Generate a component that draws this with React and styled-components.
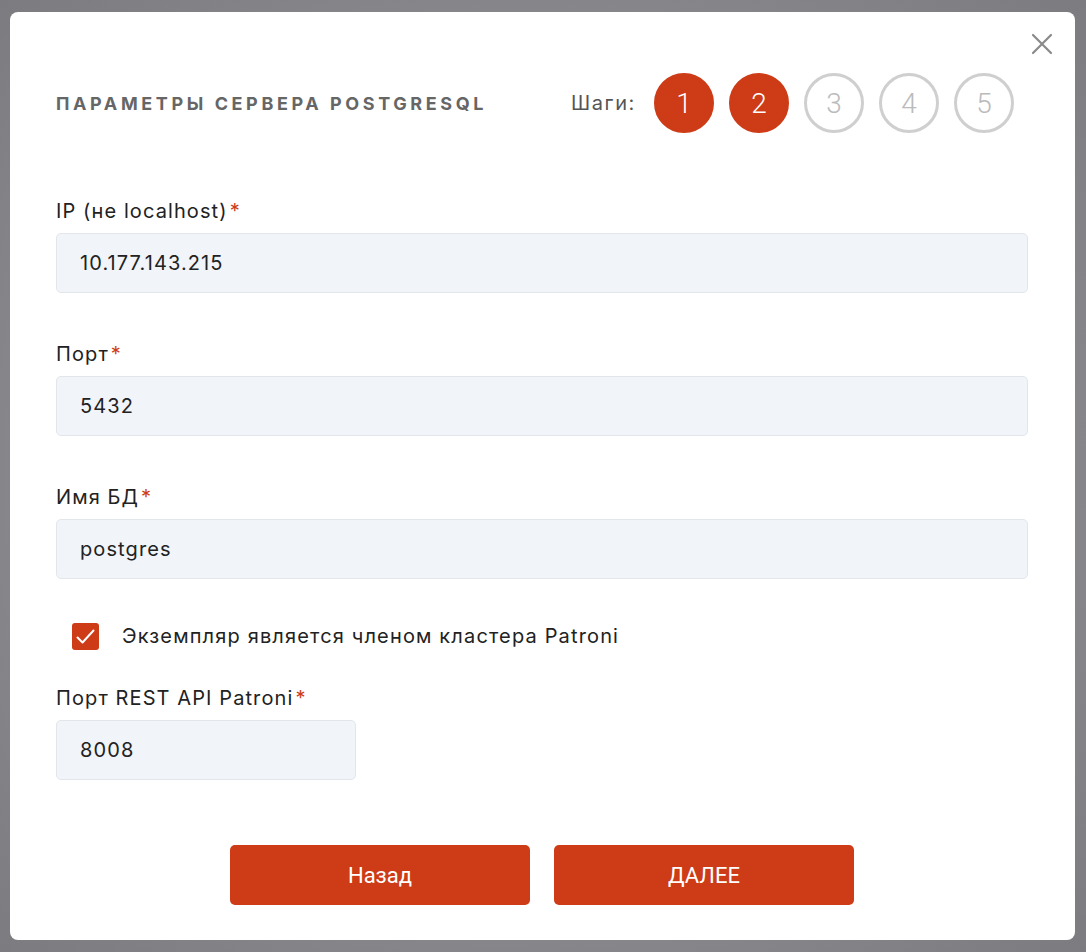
import React from 'react';
import styled, { createGlobalStyle } from 'styled-components';

const GlobalStyle = createGlobalStyle`
  html, body {
    margin: 0;
    padding: 0;
  }
  body {
    font-family: Inter, "Noto Sans", sans-serif;
    background: radial-gradient(ellipse at center, #9a9a9e 0%, #8a8a8e 60%, #7c7c80 100%);
    min-height: 952px;
  }
`;

const Overlay = styled.div`
  box-sizing: border-box;
  height: 952px;
  padding: 12px 11px 12px 10px;
`;

const Modal = styled.div`
  position: relative;
  box-sizing: border-box;
  height: 928px;
  background: #fff;
  border-radius: 8px;
  padding: 61px 47px 0 46px;
  display: flex;
  flex-direction: column;
`;

const CloseButton = styled.button`
  position: absolute;
  top: 10px;
  right: 11px;
  width: 44px;
  height: 44px;
  border: none;
  background: none;
  padding: 0;
  display: flex;
  align-items: center;
  justify-content: center;
  cursor: pointer;
`;

const Header = styled.div`
  display: flex;
  align-items: center;
  justify-content: space-between;
  height: 60px;
  padding-right: 14px;
`;

const Title = styled.h2`
  margin: 0;
  font-size: 18px;
  font-weight: 700;
  letter-spacing: 3.6px;
  color: #666;
  text-transform: uppercase;
`;

const Steps = styled.div`
  display: flex;
  align-items: center;
  gap: 15px;
`;

const StepsLabel = styled.span`
  font-size: 20px;
  letter-spacing: 1.6px;
  color: #555;
  margin-right: 3px;
`;

const Step = styled.div`
  box-sizing: border-box;
  width: 60px;
  height: 60px;
  border-radius: 50%;
  display: flex;
  align-items: center;
  justify-content: center;
  font-family: Roboto, sans-serif;
  font-size: 28px;
  font-weight: 300;
  color: ${p => (p.$done ? '#fff' : '#bbb')};
  background: ${p => (p.$done ? '#cd3b17' : '#fff')};
  border: 3px solid ${p => (p.$done ? '#cd3b17' : '#cfcfcf')};
`;

const Form = styled.div`
  display: flex;
  flex-direction: column;
  margin-top: 66px;
`;

const Field = styled.div`
  display: flex;
  flex-direction: column;
  gap: 10px;
  margin-bottom: 49px;
`;

const Label = styled.label`
  font-size: 20px;
  line-height: 24px;
  color: #222;
  letter-spacing: 1.1px;
`;

const Required = styled.span`
  color: #cd3b17;
  margin-left: 2px;
`;

const Input = styled.input`
  box-sizing: border-box;
  width: ${p => p.$width || '100%'};
  height: 60px;
  padding: 0 23px;
  background: #f1f4f8;
  border: 1px solid #e2e6eb;
  border-radius: 5px;
  font-family: Inter, sans-serif;
  font-size: 20px;
  letter-spacing: 1.1px;
  color: #222;
  outline: none;
`;

const CheckRow = styled.label`
  display: flex;
  align-items: center;
  gap: 23px;
  padding-left: 16px;
  height: 40px;
  margin-top: -12px;
  margin-bottom: 30px;
  font-size: 20px;
  letter-spacing: 1.15px;
  color: #222;
`;

const CheckBox = styled.span`
  width: 27px;
  height: 27px;
  border-radius: 3px;
  background: #cd3b17;
  display: flex;
  align-items: center;
  justify-content: center;
`;

const Buttons = styled.div`
  display: flex;
  justify-content: center;
  gap: 24px;
  margin-top: 16px;
`;

const Button = styled.button`
  width: 300px;
  height: 60px;
  border: none;
  border-radius: 5px;
  background: #cd3b17;
  color: #fff;
  font-family: Roboto, sans-serif;
  font-size: 22px;
  cursor: pointer;
`;

export default function App() {
  return (
    <>
      <GlobalStyle />
      <Overlay>
        <Modal>
          <CloseButton aria-label="close">
            <svg width="22" height="22" viewBox="0 0 22 22">
              <path d="M2 2 L20 20 M20 2 L2 20" stroke="#8a8a8a" strokeWidth="2.2" strokeLinecap="round" />
            </svg>
          </CloseButton>
          <Header>
            <Title>Параметры сервера PostgreSQL</Title>
            <Steps>
              <StepsLabel>Шаги:</StepsLabel>
              {[1, 2, 3, 4, 5].map(n => (
                <Step key={n} $done={n <= 2}>{n}</Step>
              ))}
            </Steps>
          </Header>
          <Form>
            <Field>
              <Label>IP (не localhost)<Required>*</Required></Label>
              <Input defaultValue="10.177.143.215" />
            </Field>
            <Field>
              <Label>Порт<Required>*</Required></Label>
              <Input defaultValue="5432" />
            </Field>
            <Field>
              <Label>Имя БД<Required>*</Required></Label>
              <Input defaultValue="postgres" />
            </Field>
            <CheckRow>
              <CheckBox>
                <svg width="27" height="27" viewBox="0 0 27 27">
                  <path d="M5.5 14.5 L10.5 19.5 L21.5 7.5" stroke="#fff" strokeWidth="2" fill="none" strokeLinecap="round" strokeLinejoin="round" />
                </svg>
              </CheckBox>
              Экземпляр является членом кластера Patroni
            </CheckRow>
            <Field>
              <Label>Порт REST API Patroni<Required>*</Required></Label>
              <Input $width="300px" defaultValue="8008" />
            </Field>
            <Buttons>
              <Button>Назад</Button>
              <Button>ДАЛЕЕ</Button>
            </Buttons>
          </Form>
        </Modal>
      </Overlay>
    </>
  );
}
